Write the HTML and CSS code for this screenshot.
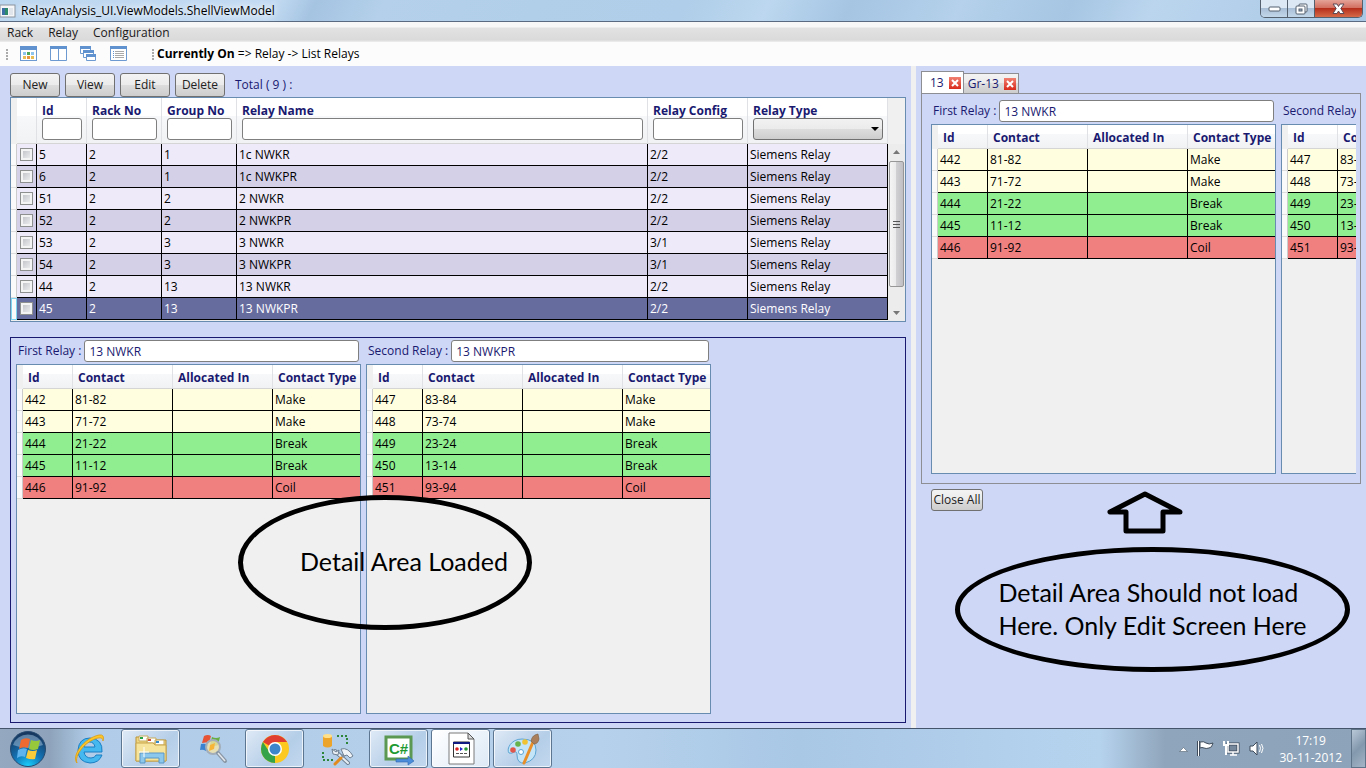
FILE: index.html
```html
<!DOCTYPE html>
<html lang="en">
<head>
<meta charset="utf-8">
<title>RelayAnalysis_UI.ViewModels.ShellViewModel</title>
<link rel="stylesheet" href="styles.css">
</head>
<body>
<header class="titlebar">
  <svg class="app-icon" width="16" height="16" viewBox="0 0 16 16"><rect x="0" y="2" width="15" height="12" fill="#f4f6f8" stroke="#8a949e"/><rect x="2" y="5" width="6" height="7" fill="#2e8b6a"/><rect x="2" y="5" width="3" height="7" fill="#3b6ea5"/><rect x="9" y="5" width="4" height="7" fill="#dfe5ea"/></svg>
  <h1 class="title">RelayAnalysis_UI.ViewModels.ShellViewModel</h1>
  <div class="window-buttons">
    <button class="win-btn" aria-label="Minimize"><svg width="13" height="6" viewBox="0 0 13 6"><rect x="1" y="1" width="11" height="4" rx="1" fill="#fff" stroke="#55606e"/></svg></button>
    <button class="win-btn" aria-label="Restore"><svg width="13" height="12" viewBox="0 0 13 12"><rect x="4" y="1" width="8" height="8" rx="1" fill="#fff" stroke="#55606e"/><rect x="1" y="3" width="9" height="8" rx="1" fill="#fff" stroke="#55606e"/><rect x="4" y="6" width="3" height="2" fill="#9db4cc" stroke="#55606e"/></svg></button>
    <button class="win-btn win-close" aria-label="Close"><svg width="13" height="12" viewBox="0 0 13 12"><path d="M1 1h4l1.500 2.500L8 1h4L8.800 5.500 12 10.500H8L6.500 8 5 10.500H1l3.200-5z" fill="#fff" stroke="#5d4a55"/></svg></button>
  </div>
</header>
<nav class="menubar">
  <a href="#rack">Rack</a><a href="#relay">Relay</a><a href="#configuration">Configuration</a>
</nav>
<div class="toolbar">
  <div class="tool-group">
    <span class="grip"></span>
    <button class="tool" aria-label="Large icons"><svg width="18" height="16" viewBox="0 0 18 16"><rect x=".5" y=".5" width="16" height="14" fill="#fff" stroke="#6d9ad0"/><rect width="17" height="4" fill="#5f92cf"/><path d="M3 6h3v3H3z" fill="#8ec5ef"/><path d="M7 6h3v3H7z" fill="#4fa85a"/><path d="M11 6h3v3h-3z" fill="#8ec5ef"/><path d="M3 10h3v3H3z" fill="#e8bd55"/><path d="M7 10h3v3H7z" fill="#e89440"/><path d="M11 10h3v3h-3z" fill="#e8bd55"/></svg></button>
    <button class="tool" aria-label="Side by side"><svg width="18" height="16" viewBox="0 0 18 16"><path d="M.5.5h16v14H.5z" fill="#fff" stroke="#6d9ad0"/><path d="M0 0h17v3H0z" fill="#5f92cf"/><path d="M8.500 3v11" stroke="#6d9ad0"/></svg></button>
    <button class="tool" aria-label="Cascade"><svg width="18" height="16" viewBox="0 0 18 16"><g fill="#fff" stroke="#6d9ad0"><path d="M.5.5h10v7H.5z"/><path d="M3.500 4.500h10v7h-10z"/><path d="M6.500 8.500h9v6h-9z"/></g><path d="M0 0h11v3H0zM3 4h11v3H3zM6 8h10v3H6z" fill="#5f92cf"/></svg></button>
    <button class="tool" aria-label="List"><svg width="18" height="16" viewBox="0 0 18 16"><path d="M.5.5h16v14H.5z" fill="#fff" stroke="#6d9ad0"/><path d="M0 0h17v3H0z" fill="#5f92cf"/><path d="M3 5.500h1M3 7.500h1M3 9.500h1M3 11.500h1" stroke="#5f92cf"/><path d="M5 5.500h9M5 7.500h9M5 9.500h9M5 11.500h9" stroke="#a9a9a9"/></svg></button>
  </div>
  <div class="tool-group location">
    <span class="grip"></span>
    <p><strong>Currently On</strong> =&gt; Relay -&gt; List Relays</p>
  </div>
</div>
<main class="workspace">
  <section class="list-pane">
    <div class="actions">
      <button class="btn">New</button><button class="btn">View</button><button class="btn">Edit</button><button class="btn">Delete</button>
      <span class="total">Total ( 9 ) :</span>
    </div>
    <div class="grid relay-grid">
      <table class="data relays">
        <colgroup><col class="c-head"><col class="c-check"><col class="c-50"><col class="c-75"><col class="c-75"><col><col class="c-100"><col class="c-140"></colgroup>
        <thead>
          <tr><th class="rowhead"></th><th></th>
            <th><label for="f-id">Id</label><input id="f-id" class="field" type="text"></th>
            <th><label for="f-rack">Rack No</label><input id="f-rack" class="field" type="text"></th>
            <th><label for="f-group">Group No</label><input id="f-group" class="field" type="text"></th>
            <th><label for="f-name">Relay Name</label><input id="f-name" class="field" type="text"></th>
            <th><label for="f-config">Relay Config</label><input id="f-config" class="field" type="text"></th>
            <th><label for="f-type">Relay Type</label><span class="select-wrap"><select id="f-type" class="field"><option></option><option>Siemens Relay</option></select></span></th></tr>
        </thead>
        <tbody>
          <tr><td class="rowhead"></td><td><input type="checkbox" aria-label="Select 5"></td><td>5</td><td>2</td><td>1</td><td>1c NWKR</td><td>2/2</td><td>Siemens Relay</td></tr>
          <tr><td class="rowhead"></td><td><input type="checkbox" aria-label="Select 6"></td><td>6</td><td>2</td><td>1</td><td>1c NWKPR</td><td>2/2</td><td>Siemens Relay</td></tr>
          <tr><td class="rowhead"></td><td><input type="checkbox" aria-label="Select 51"></td><td>51</td><td>2</td><td>2</td><td>2 NWKR</td><td>2/2</td><td>Siemens Relay</td></tr>
          <tr><td class="rowhead"></td><td><input type="checkbox" aria-label="Select 52"></td><td>52</td><td>2</td><td>2</td><td>2 NWKPR</td><td>2/2</td><td>Siemens Relay</td></tr>
          <tr><td class="rowhead"></td><td><input type="checkbox" aria-label="Select 53"></td><td>53</td><td>2</td><td>3</td><td>3 NWKR</td><td>3/1</td><td>Siemens Relay</td></tr>
          <tr><td class="rowhead"></td><td><input type="checkbox" aria-label="Select 54"></td><td>54</td><td>2</td><td>3</td><td>3 NWKPR</td><td>3/1</td><td>Siemens Relay</td></tr>
          <tr><td class="rowhead"></td><td><input type="checkbox" aria-label="Select 44"></td><td>44</td><td>2</td><td>13</td><td>13 NWKR</td><td>2/2</td><td>Siemens Relay</td></tr>
          <tr class="selected"><td class="rowhead"></td><td><input type="checkbox" aria-label="Select 45"></td><td>45</td><td>2</td><td>13</td><td>13 NWKPR</td><td>2/2</td><td>Siemens Relay</td></tr>
        </tbody>
      </table>
      <div class="scrollbar">
        <svg class="arrow" width="7" height="4" viewBox="0 0 7 4"><path d="M0 4l3.500-4L7 4z" fill="#777"/></svg>
        <div class="thumb"></div>
        <svg class="arrow" width="7" height="4" viewBox="0 0 7 4"><path d="M0 0l3.500 4L7 0z" fill="#777"/></svg>
      </div>
    </div>
    <div class="detail-box">
      <div class="relay-panel">
        <div class="relay-field"><label for="d-first">First Relay :</label><input id="d-first" class="field" type="text" value="13 NWKR"></div>
        <div class="grid contact-grid">
          <table class="data contacts">
            <colgroup><col class="c-head"><col class="c-50"><col class="c-100"><col class="c-100"><col></colgroup>
            <thead><tr><th class="rowhead"></th><th>Id</th><th>Contact</th><th>Allocated In</th><th>Contact Type</th></tr></thead>
            <tbody>
              <tr class="make"><td class="rowhead"></td><td>442</td><td>81-82</td><td></td><td>Make</td></tr>
              <tr class="make"><td class="rowhead"></td><td>443</td><td>71-72</td><td></td><td>Make</td></tr>
              <tr class="break"><td class="rowhead"></td><td>444</td><td>21-22</td><td></td><td>Break</td></tr>
              <tr class="break"><td class="rowhead"></td><td>445</td><td>11-12</td><td></td><td>Break</td></tr>
              <tr class="coil"><td class="rowhead"></td><td>446</td><td>91-92</td><td></td><td>Coil</td></tr>
            </tbody>
          </table>
        </div>
      </div>
      <div class="relay-panel">
        <div class="relay-field"><label for="d-second">Second Relay :</label><input id="d-second" class="field" type="text" value="13 NWKPR"></div>
        <div class="grid contact-grid">
          <table class="data contacts">
            <colgroup><col class="c-head"><col class="c-50"><col class="c-100"><col class="c-100"><col></colgroup>
            <thead><tr><th class="rowhead"></th><th>Id</th><th>Contact</th><th>Allocated In</th><th>Contact Type</th></tr></thead>
            <tbody>
              <tr class="make"><td class="rowhead"></td><td>447</td><td>83-84</td><td></td><td>Make</td></tr>
              <tr class="make"><td class="rowhead"></td><td>448</td><td>73-74</td><td></td><td>Make</td></tr>
              <tr class="break"><td class="rowhead"></td><td>449</td><td>23-24</td><td></td><td>Break</td></tr>
              <tr class="break"><td class="rowhead"></td><td>450</td><td>13-14</td><td></td><td>Break</td></tr>
              <tr class="coil"><td class="rowhead"></td><td>451</td><td>93-94</td><td></td><td>Coil</td></tr>
            </tbody>
          </table>
        </div>
      </div>
    </div>
    <p class="note note-left">Detail Area Loaded</p>
  </section>
  <div class="splitter"></div>
  <section class="tab-pane">
    <div class="tabs">
      <div class="tab active"><span>13</span><button class="tab-close" aria-label="Close 13"><svg width="12" height="12" viewBox="0 0 12 12"><path d="M3 3l6 6M9 3l-6 6" stroke="#fff" stroke-width="2"/></svg></button></div>
      <div class="tab"><span>Gr-13</span><button class="tab-close" aria-label="Close Gr-13"><svg width="12" height="12" viewBox="0 0 12 12"><path d="M3 3l6 6M9 3l-6 6" stroke="#fff" stroke-width="2"/></svg></button></div>
    </div>
    <div class="tab-content">
      <div class="tab-scroll">
        <div class="relay-panel">
          <div class="relay-field"><label for="t-first">First Relay :</label><input id="t-first" class="field" type="text" value="13 NWKR"></div>
          <div class="grid contact-grid">
            <table class="data contacts">
              <colgroup><col class="c-head"><col class="c-50"><col class="c-100"><col class="c-100"><col></colgroup>
              <thead><tr><th class="rowhead"></th><th>Id</th><th>Contact</th><th>Allocated In</th><th>Contact Type</th></tr></thead>
              <tbody>
                <tr class="make"><td class="rowhead"></td><td>442</td><td>81-82</td><td></td><td>Make</td></tr>
                <tr class="make"><td class="rowhead"></td><td>443</td><td>71-72</td><td></td><td>Make</td></tr>
                <tr class="break"><td class="rowhead"></td><td>444</td><td>21-22</td><td></td><td>Break</td></tr>
                <tr class="break"><td class="rowhead"></td><td>445</td><td>11-12</td><td></td><td>Break</td></tr>
                <tr class="coil"><td class="rowhead"></td><td>446</td><td>91-92</td><td></td><td>Coil</td></tr>
              </tbody>
            </table>
          </div>
        </div>
        <div class="relay-panel">
          <div class="relay-field"><label for="t-second">Second Relay :</label><input id="t-second" class="field" type="text" value="13 NWKPR"></div>
          <div class="grid contact-grid">
            <table class="data contacts">
              <colgroup><col class="c-head"><col class="c-50"><col class="c-100"><col class="c-100"><col></colgroup>
              <thead><tr><th class="rowhead"></th><th>Id</th><th>Contact</th><th>Allocated In</th><th>Contact Type</th></tr></thead>
              <tbody>
                <tr class="make"><td class="rowhead"></td><td>447</td><td>83-84</td><td></td><td>Make</td></tr>
                <tr class="make"><td class="rowhead"></td><td>448</td><td>73-74</td><td></td><td>Make</td></tr>
                <tr class="break"><td class="rowhead"></td><td>449</td><td>23-24</td><td></td><td>Break</td></tr>
                <tr class="break"><td class="rowhead"></td><td>450</td><td>13-14</td><td></td><td>Break</td></tr>
                <tr class="coil"><td class="rowhead"></td><td>451</td><td>93-94</td><td></td><td>Coil</td></tr>
              </tbody>
            </table>
          </div>
        </div>
      </div>
    </div>
    <button class="btn close-all">Close All</button>
    <svg class="note-arrow" width="78" height="44" viewBox="0 0 78 44"><path d="M39 4L4 22h16v19h37V22h17z" fill="none" stroke="#000" stroke-width="5" stroke-linejoin="round"/></svg>
    <p class="note note-right">Detail Area Should not load<br>Here. Only Edit Screen Here</p>
  </section>
</main>
<footer class="taskbar">
  <button class="task start" aria-label="Start"><svg width="38" height="38" viewBox="0 0 38 38"><defs><radialGradient id="orb" cx=".5" cy="1" r=".95"><stop offset="0" stop-color="#19d3ff"/><stop offset=".45" stop-color="#1373b5"/><stop offset="1" stop-color="#17375f"/></radialGradient></defs><circle cx="19" cy="19" r="17.500" fill="url(#orb)" stroke="#274a70"/><path d="M4 15a15.500 14 0 0 1 30 0q-15 6-30 0z" fill="#b9d2e8" opacity=".45"/><path d="M12 10q4-3 9-1l-2 9q-5-2-9 1z" fill="#ee6a30"/><path d="M22 10q5 2 9 0l-2 9q-5 2-9 0z" fill="#97c83c"/><path d="M9 20q5-3 9-1l-2 8q-4-2-8 1z" fill="#5fb4ee"/><path d="M19 20q5 2 9 0l-2 9q-4 1-9-1z" fill="#fbcb3a"/></svg></button>
  <button class="task" aria-label="Internet Explorer"><svg width="34" height="34" viewBox="0 0 34 34"><path d="M30 20H12q1 6 7 6 4 0 5-3h6q-3 8-12 8Q6 30 6 18 7 6 18 6q13 1 12 14zM12 15h11q-1-5-5.500-5T12 15z" fill="#45b8ef" stroke="#1b7fc4"/><path d="M5 31C-1 24 12 6 27 3q6-1 4 6 0-4-5-3C13 9 2 24 5 31z" fill="#fcc729" stroke="#dd9a12" stroke-width=".8"/></svg></button>
  <button class="task open" aria-label="Windows Explorer"><svg width="34" height="34" viewBox="0 0 34 34"><path d="M2 5h9l1 3h20v21H2z" fill="#efd681" stroke="#b9933c"/><path d="M5 4h9v5H5zM13 6h9v5h-9zM21 8h9v5h-9z" fill="#fff" stroke="#c8ab5a"/><path d="M6 5h3v2H6z" fill="#25a244"/><path d="M14 7h3v2h-3z" fill="#d14b32"/><path d="M22 9h3v2h-3z" fill="#3489cd"/><path d="M2 11h17l2 2h11v16H2z" fill="#f6e39c" stroke="#c8a54c"/><path d="M6 31V21h24v10h-5v-5H11v5z" fill="#8cc7ec" stroke="#5a98c7"/><path d="M10 15v10M5 20h10" stroke="#fff"/></svg></button>
  <button class="task" aria-label="Search"><svg width="34" height="34" viewBox="0 0 34 34"><path d="M8 4q4-2 7 0l-2 7q-3-1-7 0z" fill="#e65335"/><path d="M16 5q4 2 8 0l-2 8q-4 2-8 0z" fill="#67ae43"/><path d="M5 12q4-1 7 1l-2 6q-3-2-6-1z" fill="#3b83d0"/><circle cx="17" cy="15" r="7" fill="#f4e3a8" fill-opacity=".8" stroke="#a2adb9" stroke-width="2"/><path d="M14 13l5-2-1 6-5 2z" fill="#f7b538"/><path d="M22 21l7 8" stroke="#8996a4" stroke-width="4" stroke-linecap="round"/><path d="M22 21l7 8" stroke="#e3e8ed" stroke-width="1.500"/></svg></button>
  <button class="task open" aria-label="Chrome"><svg width="34" height="34" viewBox="0 0 34 34"><circle cx="17" cy="17" r="14" fill="#fbc91f"/><path d="M17 17L4.900 10A14 14 0 0 1 29.100 10H17z" fill="#df3e30"/><path d="M17 31A14 14 0 0 1 4.900 10L12 21l5 3z" fill="#35a34a"/><path d="M17 31l6-11-6 4z" fill="#fbc91f"/><circle cx="17" cy="17" r="7" fill="#fff"/><circle cx="17" cy="17" r="5.500" fill="#3e86cc"/></svg></button>
  <button class="task" aria-label="Database tools"><svg width="34" height="34" viewBox="0 0 34 34"><path d="M3 4v10q5 3 9 0V4z" fill="#eda42b"/><ellipse cx="7.500" cy="4" rx="4.500" ry="2" fill="#ffe08a"/><path d="M17 4h10v10M3 20v8h11" fill="none" stroke="#2c8539" stroke-width="2" stroke-dasharray="2 2"/><path d="M15 19l13 12" stroke="#6f8092" stroke-width="4" stroke-linecap="round"/><path d="M15 19l13 12" stroke="#e6edf3" stroke-width="2" stroke-linecap="round"/><path d="M27 20L22 25" stroke="#8090a0" stroke-width="3"/><path d="M21 26l-6 6" stroke="#e08a20" stroke-width="3" stroke-linecap="round"/><path d="M21 17q7-2 12 7l-3 2-3-3-3 1z" fill="#eef3f7" stroke="#6f8092"/><path d="M12 17l1 5 5 1 1-5-3 2z" fill="#eef3f7" stroke="#6f8092"/></svg></button>
  <button class="task open" aria-label="Visual C#"><svg width="34" height="34" viewBox="0 0 34 34"><path d="M4 5h25v22H4z" fill="#fff" stroke="#5b9851" stroke-width="3"/><text x="7" y="22" class="cs-text">C#</text><path d="M14 27h12v-3l6 5-6 4v-3H14z" fill="#4b8ddb" stroke="#2b66b0" stroke-width=".6"/></svg></button>
  <button class="task open focused" aria-label="Relay Analysis"><svg width="34" height="34" viewBox="0 0 34 34"><path d="M5 1h19l6 6v25H5z" fill="#fff" stroke="#7a7a7a"/><path d="M24 1v6h6z" fill="#ddd" stroke="#555"/><path d="M9.500 10h16v15h-16z" fill="#fff" stroke="#333"/><path d="M9 10h17v2H9z" fill="#101a80"/><circle cx="13" cy="17" r="1.800" fill="#d22"/><path d="M16 15l3 2-3 2z" fill="#22c"/><circle cx="22" cy="17" r="1.800" fill="#293"/><path d="M12 21.500h3M16 21.500h3M20 21.500h3" stroke="#555"/></svg></button>
  <button class="task open" aria-label="Paint"><svg width="34" height="34" viewBox="0 0 34 34"><path d="M16 7C5 7 0 17 3 21q3 1 5-1 3-1 3 3 0 9 8 8 11-3 11-13 0-11-14-11z" fill="#c4e4f7" stroke="#5ba5d3"/><circle cx="7" cy="18" r="2.800" fill="#e2574c"/><circle cx="12" cy="12" r="2.800" fill="#66b34d"/><circle cx="19" cy="10" r="2.800" fill="#f1c232"/><circle cx="15" cy="20" r="2.500" fill="#fff" stroke="#5ba5d3"/><path d="M27 10L18 31" stroke="#e88f2a" stroke-width="3" stroke-linecap="round"/><path d="M25 9q1-6 7-7l1 5q-1 5-5 5z" fill="#a9805b" stroke="#7e5d40" stroke-width=".6"/></svg></button>
  <div class="tray">
    <svg width="9" height="6" viewBox="0 0 9 6"><path d="M.5 5.500l4-4 4 4z" fill="#fff" stroke="#51616f" stroke-width=".6"/></svg>
    <svg width="17" height="17" viewBox="0 0 17 17"><path d="M1.500 1v15" stroke="#3d4b5a" stroke-width="3"/><path d="M3 2q4-1 6 1 3 2 7 0-1 5-4 5-3 1-5 0-2-1-4 0z" fill="#fff" stroke="#3d4b5a"/><path d="M1.500 1v15" stroke="#fff"/></svg>
    <svg width="17" height="17" viewBox="0 0 17 17"><path d="M5 4h10v8H5z" fill="#76899c" stroke="#3d4b5a" stroke-width="3"/><path d="M5 4h10v8H5zM10 12v3M7 15h7" fill="none" stroke="#fff" stroke-width="1.500"/><path d="M1 1v4h4V1M3 5v10" fill="none" stroke="#fff" stroke-width="2"/></svg>
    <svg width="15" height="17" viewBox="0 0 15 17"><path d="M1 6h3l4-4v13l-4-4H1z" fill="#fff" stroke="#3d4b5a"/><path d="M10.500 5q2 3 0 7M12.500 4q3 4 0 9" fill="none" stroke="#fff"/></svg>
    <time class="clock" datetime="2012-11-30T17:19">17:19<br>30-11-2012</time>
    <button class="show-desktop" aria-label="Show desktop"></button>
  </div>
</footer>
</body>
</html>
```
FILE: styles.css
```css
* { box-sizing: border-box; }

body {
  margin: 0;
  min-height: 100vh;
  display: flex;
  flex-direction: column;
  font: 12px/16px "Open Sans", "Noto Sans", sans-serif;
  color: #000;
  background: #ced7f6;
}

button, input, select { font: inherit; color: inherit; }
button { margin: 0; }
p, h1 { margin: 0; }

/* Window frame */
.titlebar {
  flex: none;
  display: flex;
  align-items: center;
  height: 22px;
  border-bottom: 1px solid #5a6a80;
  background: linear-gradient(115deg, #bcd7f0 0, #c3dbf2 20%, #a5c4e2 23%, #b4d0ea 28%, #b0cee9 50%, #bcd7ef 56%, #a5c5e3 62%, #b5d1eb 70%, #a6c6e3 78%, #bbd5ee 84%, #a9c8e5 100%);
}
.app-icon { flex: none; }
.title {
  padding: 0 5px;
  font-size: 12px;
  font-weight: 400;
  line-height: 20px;
  text-shadow: 0 0 6px #fff, 0 0 10px #fff;
}
.window-buttons {
  align-self: flex-start;
  display: flex;
  margin: 0 3px 0 auto;
  border: 1px solid #55606e;
  border-top: 0;
  border-radius: 0 0 5px 5px;
  overflow: hidden;
}
.win-btn {
  display: grid;
  place-items: center;
  width: 27px;
  height: 17px;
  padding: 0;
  border: 0;
  border-right: 1px solid #55606e;
  background: linear-gradient(#dce8f4 0 45%, #a9bfd6 50%, #c3d7ea);
}
.win-close { width: 47px; border-right: 0; background: linear-gradient(#e4a397 0, #d37061 45%, #b52f1c 50%, #d66a48); }

.menubar {
  flex: none;
  display: flex;
  gap: 15px;
  height: 20px;
  padding: 3px 7px 0;
  background: linear-gradient(#f7f7f7 0 25%, #e3e2e2 30%, #dbdada 90%, #efefef);
}
.menubar a { color: #1a1a1a; text-decoration: none; }

.toolbar {
  flex: none;
  display: flex;
  align-items: center;
  gap: 16px;
  height: 24px;
  padding-left: 6px;
  background: #fcfcfc;
}
.tool-group { display: flex; align-items: center; gap: 12px; }
.location { gap: 3px; margin-left: 8px; }
.grip { width: 2px; height: 11px; background: repeating-linear-gradient(#aaa 0 2px, transparent 2px 3px); }
.tool { display: block; padding: 0; border: 0; background: none; height: 16px; }
.tool svg { display: block; }

/* Panes */
.workspace {
  flex: 1;
  display: grid;
  grid-template-columns: minmax(0, 911fr) 5px minmax(0, 450fr);
}
.splitter { background: #f0f0f0; }
.list-pane {
  position: relative;
  display: flex;
  flex-direction: column;
  padding: 7px 5px 5px 10px;
}
.tab-pane {
  position: relative;
  display: flex;
  flex-direction: column;
  align-items: stretch;
  padding: 5px 5px 0;
}

.actions { display: flex; align-items: center; gap: 5px; color: #191970; }
.total { padding-left: 5px; }
.btn {
  width: 50px;
  height: 24px;
  padding: 0;
  border: 1px solid #707070;
  border-radius: 3px;
  color: #222;
  background: linear-gradient(#f3f3f3, #ebebeb 50%, #dddddd 50%, #cdcdcd);
}

.field {
  width: 100%;
  height: 22px;
  padding: 1px 4px 0;
  border: 1px solid #7f7f7f;
  border-radius: 3px;
  color: #191970;
  background: #fff;
}

/* Data grids */
.grid { border: 1px solid #688caf; background: #f0f0f0; overflow: hidden; }
.data { width: 100%; table-layout: fixed; border-collapse: separate; border-spacing: 0; }
.c-head { width: 6px; }
.c-check { width: 20px; }
.c-50 { width: 50px; }
.c-75 { width: 75px; }
.c-100 { width: 100px; }
.c-140 { width: 140px; }

.data th {
  padding: 0 4px 0 5px;
  border-bottom: 1px solid #d5d5d5;
  border-right: 1px solid #dfe1e4;
  font-weight: 700;
  text-align: left;
  white-space: nowrap;
  color: #191970;
  background: linear-gradient(#fff 0 40%, #f7f8fa 40%, #f1f2f4);
}
.data td {
  height: 22px;
  padding: 0 2px;
  border-right: 1px solid #000;
  border-bottom: 1px solid #000;
  line-height: 16px;
}
.data th.rowhead { padding: 0; background: #f0f0f0; border: 0; }
.data td.rowhead { padding: 0; background: #fafafa; border-right: 1px solid #ccc; border-bottom: 1px solid #ddd; }

.relay-grid { flex: none; display: flex; height: 225px; }
.relays { flex: 1; align-self: flex-start; min-width: 0; }
.relays th { height: 46px; vertical-align: top; padding-top: 5px; }
.relays th label { display: block; line-height: 15px; }
.relays th .field { display: block; }
.relays tbody tr { background: #eeeaf9; }
.relays tbody tr:nth-child(even) { background: #d4d0e8; }
.relays tbody tr.selected { color: #fff; background: #676c9f; }
.relays tr.selected td.rowhead { border: 1px solid #7fd4f0; }

.select-wrap { display: block; position: relative; }
.select-wrap .field { appearance: none; border-color: #707070; background: linear-gradient(#f2f2f2, #ebebeb 50%, #dddddd 50%, #cdcdcd); }
.select-wrap::after {
  content: "";
  position: absolute;
  right: 4px;
  top: 9px;
  border: 4px solid transparent;
  border-top-color: #000;
  border-bottom: 0;
  pointer-events: none;
}

input[type="checkbox"] {
  appearance: none;
  display: block;
  width: 13px;
  height: 13px;
  margin: 0 1px;
  border: 1px solid #8e8f8f;
  background: linear-gradient(135deg, #b9bcc2, #f6f6f6);
  box-shadow: inset 0 0 0 2px #f4f4f4;
}

.scrollbar {
  flex: none;
  display: flex;
  flex-direction: column;
  align-items: center;
  gap: 7px;
  width: 17px;
  margin-top: 46px;
  padding: 6px 0;
  background: #ececec;
}
.arrow { flex: none; }
.thumb {
  width: 15px;
  height: 126px;
  border: 1px solid #979797;
  border-radius: 2px;
  background:
    repeating-linear-gradient(#555 0 1px, transparent 1px 3px) center / 7px 7px no-repeat,
    linear-gradient(90deg, #f5f5f5, #e9e9eb 50%, #d0d0d3 50%, #c0c0c4);
}
.thumb + .arrow { margin-top: auto; }

/* Relay details */
.detail-box {
  flex: 1;
  display: flex;
  gap: 5px;
  margin-top: 15px;
  padding: 2px 5px 8px;
  border: 1px solid #191970;
}
.relay-panel { flex: none; display: flex; flex-direction: column; gap: 2px; width: 345px; color: #191970; }
.relay-field { display: flex; align-items: center; gap: 3px; padding: 0 2px; }
.relay-field label { flex: none; font-weight: 500; line-height: 20px; }
.relay-field .field { flex: 1; min-width: 0; }
.contact-grid { flex: 1; color: #000; }
.contacts th { height: 24px; padding-top: 2px; line-height: 16px; }
.contacts th:last-child, .contacts td:last-child { border-right: 0; }
.make { background: #ffffe0; }
.break { background: #90ee90; }
.coil { background: #f08080; }

/* Tabs */
.tabs { display: flex; align-items: flex-end; height: 22px; }
.tab {
  display: flex;
  align-items: center;
  gap: 5px;
  height: 20px;
  padding: 0 2px 0 4px;
  border: 1px solid #8c8e94;
  border-bottom: 0;
  border-left: 0;
  color: #191970;
  background: linear-gradient(#f3f3f3, #ebebeb 50%, #dddddd 50%, #cdcdcd);
}
.tab.active { height: 22px; padding: 0 2px 0 8px; border-left: 1px solid #8c8e94; background: #fff; }
.tab-close { display: block; width: 12px; height: 12px; padding: 0; border: 0; background: linear-gradient(#f08070, #d92b1c); }
.tab-close svg { display: block; }
.tab-content {
  height: 391px;
  padding: 6px 4px 9px 9px;
  border: 1px solid #8c8e94;
}
.tab-scroll { display: flex; gap: 5px; height: 100%; overflow: hidden; }
.close-all { width: 52px; height: 22px; margin: 5px 0 0 10px; }

/* Annotations */
.note {
  position: absolute;
  display: grid;
  place-content: center;
  border: 5px solid #000;
  border-radius: 50%;
  font: 25px/33px Lato, "Open Sans", sans-serif;
  white-space: nowrap;
}
.note-left { left: 238px; top: 429px; width: 294px; height: 135px; padding: 0 0 2px 38px; }
.note-right { left: 39px; top: 481px; width: 395px; height: 125px; padding-bottom: 2px; }
.note-arrow { position: absolute; left: 190px; top: 424px; }

/* Taskbar */
.taskbar {
  flex: none;
  display: flex;
  align-items: stretch;
  gap: 3px;
  height: 40px;
  padding-left: 8px;
  border-top: 1px solid #44546a;
  background: linear-gradient(90deg, #94a9c0 0, #8ea3bb 50px, #b0cce8 90px, #b6d1eb 600px, #a9c8e6 800px, #b6d3ee 1100px, #8fa5bb 1165px, #8da3b9 100%);
}
.task {
  display: grid;
  place-items: center;
  width: 59px;
  padding: 0;
  border: 1px solid transparent;
  background: none;
}
.start { width: 38px; margin-right: 10px; }
.open { border-color: #5c7591; border-radius: 3px; box-shadow: inset 0 0 0 1px rgba(255, 255, 255, .7); background: linear-gradient(135deg, #dfeaf6, #b5cee8 60%, #c2d8ee); }
.focused { background: linear-gradient(135deg, #fff, #dce9f6); }
.cs-text { font: bold 15px "Liberation Sans", sans-serif; fill: #1f9a32; }
.tray { display: flex; align-items: center; gap: 9px; margin-left: auto; color: #fff; }
.clock { padding-left: 6px; text-align: center; line-height: 17px; }
.show-desktop { align-self: stretch; width: 15px; padding: 0; border: 1px solid #5f7488; background: linear-gradient(135deg, #b9c9d8, #8398ad 50%, #a4b5c6); }
```
